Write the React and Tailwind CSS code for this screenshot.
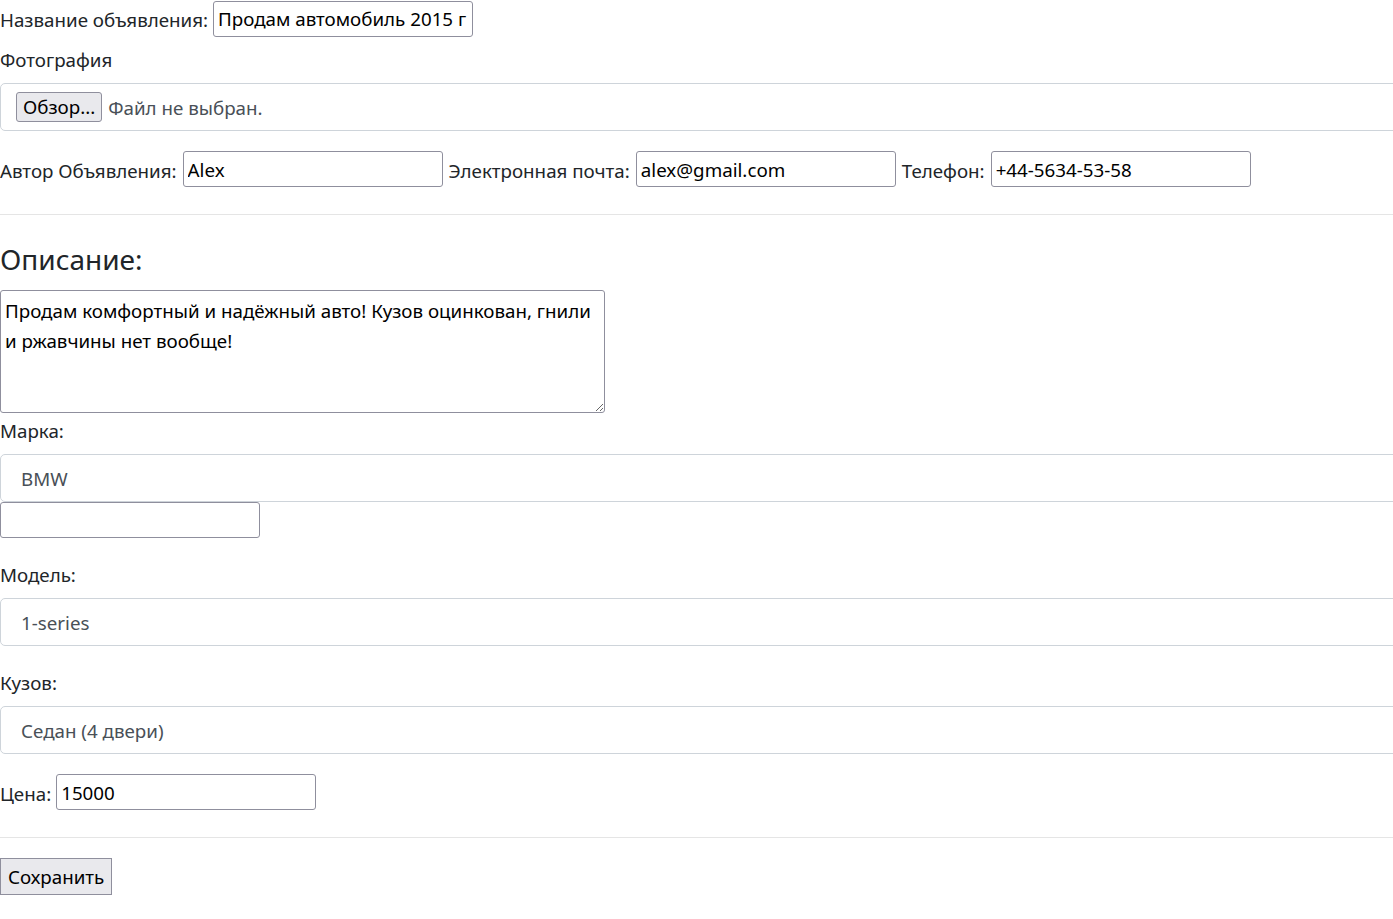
import { useState } from 'react';

const field =
  'h-[36px] w-[260px] shrink-0 border border-[#8f8f9d] rounded-[3px] px-[4px] text-[18.75px] text-black bg-white outline-none';
const rowLabel = 'pt-[3px]';
const blockLabel = 'block h-[30px]';

function SelectBox({ value }) {
  return (
    <div className="h-[48px] w-[calc(100%+20px)] border border-[#ced4da] rounded-[5px] flex items-center pl-[20px] pt-[2px] text-[#495057] bg-white">
      {value}
    </div>
  );
}

export default function App() {
  const [title, setTitle] = useState('Продам автомобиль 2015 г');
  const [author, setAuthor] = useState('Alex');
  const [email, setEmail] = useState('alex@gmail.com');
  const [phone, setPhone] = useState('+44-5634-53-58');
  const [price, setPrice] = useState('15000');
  const [text, setText] = useState(
    'Продам комфортный и надёжный авто! Кузов оцинкован, гнили и ржавчины нет вообще!'
  );

  return (
    <div
      className="min-h-screen overflow-x-hidden bg-white text-[18.75px] leading-[30px] text-[#212529]"
      style={{ fontFamily: '"Noto Sans", sans-serif' }}
    >
      <div className="flex items-center h-[37px]">
        <label className={rowLabel + ' mr-[5px]'}>Название объявления:</label>
        <input className={field} value={title} onChange={(e) => setTitle(e.target.value)} />
      </div>

      <label className={blockLabel + ' pt-[2px] mt-[6px] mb-[10px]'}>Фотография</label>
      <div className="h-[48px] w-[calc(100%+20px)] border border-[#ced4da] rounded-[5px] flex items-center pl-[15px]">
        <button className="h-[30px] px-[6px] bg-[#e9e9ed] border border-[#8f8f9d] rounded-[3px] text-black leading-none">
          Обзор...
        </button>
        <span className="ml-[6px] pt-[2px] text-[#495057]">Файл не выбран.</span>
      </div>

      <div className="flex items-center mt-[20px] h-[36px]">
        <label className={rowLabel + ' mr-[6px]'}>Автор Объявления:</label>
        <input className={field} value={author} onChange={(e) => setAuthor(e.target.value)} />
        <label className={rowLabel + ' ml-[6px] mr-[6px]'}>Электронная почта:</label>
        <input className={field} value={email} onChange={(e) => setEmail(e.target.value)} />
        <label className={rowLabel + ' ml-[6px] mr-[6px]'}>Телефон:</label>
        <input className={field} value={phone} onChange={(e) => setPhone(e.target.value)} />
      </div>

      <hr className="mt-[27px] border-t border-[#e5e5e5]" />

      <h4 className="mt-[26px] mb-[13px] text-[28px] leading-[36px] font-normal">Описание:</h4>
      <textarea
        className="block w-[605px] h-[123px] border border-[#8f8f9d] rounded-[3px] px-[4px] pt-[5px] text-black text-[18.75px] leading-[30px] outline-none"
        value={text}
        onChange={(e) => setText(e.target.value)}
      />

      <label className={blockLabel + ' mt-[3px] mb-[8px]'}>Марка:</label>
      <SelectBox value="BMW" />
      <input className={field + ' block'} />

      <label className={blockLabel + ' mt-[22px] mb-[8px]'}>Модель:</label>
      <SelectBox value="1-series" />

      <label className={blockLabel + ' mt-[22px] mb-[8px]'}>Кузов:</label>
      <SelectBox value="Седан (4 двери)" />

      <div className="flex items-center mt-[20px] h-[36px]">
        <label className={rowLabel + ' mr-[5px]'}>Цена:</label>
        <input className={field} value={price} onChange={(e) => setPrice(e.target.value)} />
      </div>

      <hr className="mt-[27px] border-t border-[#e5e5e5]" />

      <button className="mt-[20px] h-[37px] px-[7px] bg-[#e9e9ed] border border-[#8f8f9d] text-black">
        Сохранить
      </button>
    </div>
  );
}
